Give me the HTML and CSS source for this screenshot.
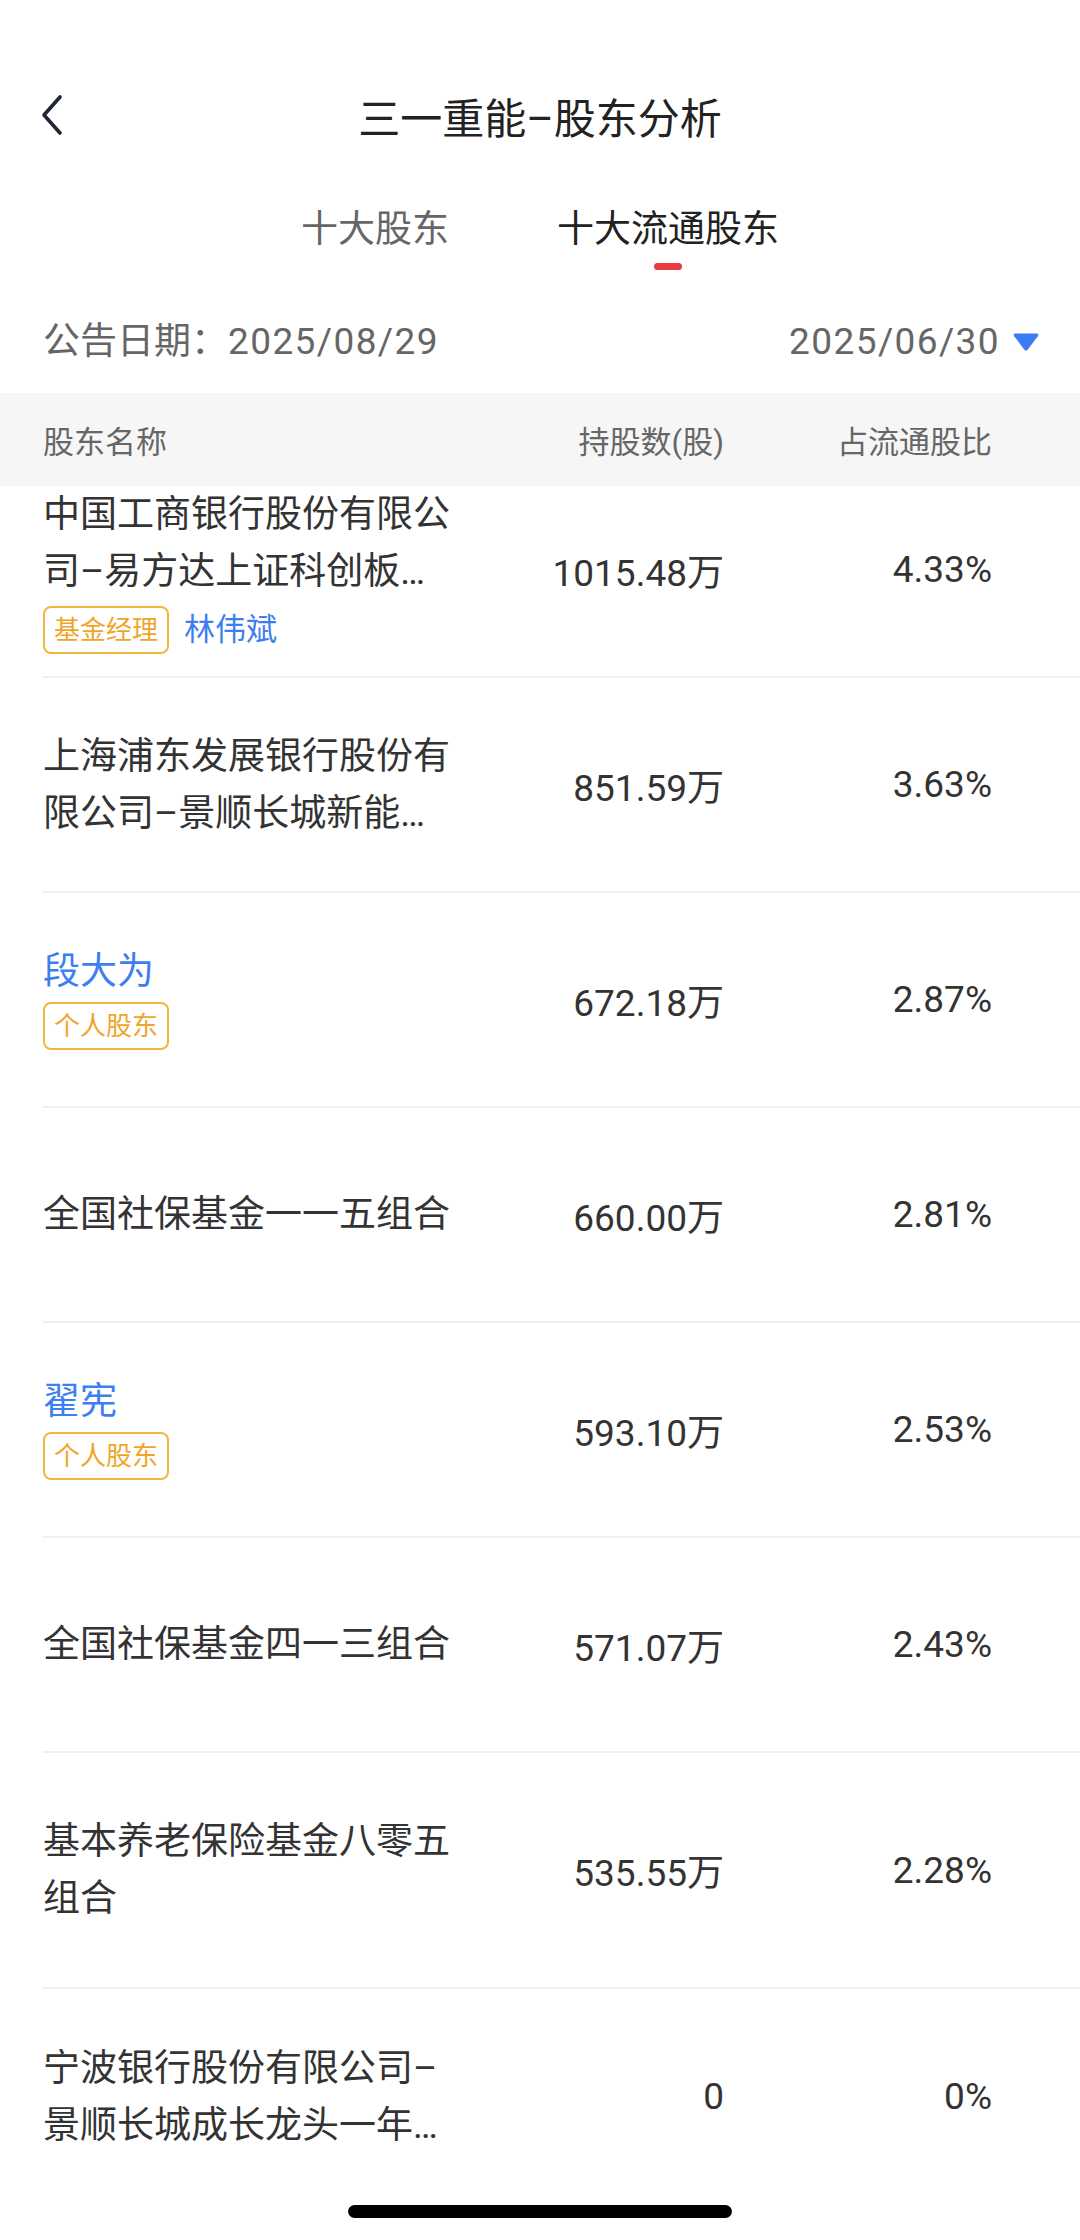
FILE: index.html
```html
<!DOCTYPE html>
<html lang="zh-CN">
<head>
  <meta charset="UTF-8">
  <meta name="viewport" content="width=device-width, initial-scale=1.0">
  <title>三一重能-股东分析</title>
  <link rel="stylesheet" href="styles.css">
</head>
<body>
  <div class="status-bar"></div>

  <header class="nav">
    <a class="back" href="#">
      <svg width="24" height="42" viewBox="0 0 24 42">
        <path d="M20 3 L4 21 L20 39" fill="none" stroke="#1e2733" stroke-width="3.6" stroke-linecap="round" stroke-linejoin="round"/>
      </svg>
    </a>
    <h1 class="title">三一重能–股东分析</h1>
    <span></span>
  </header>

  <nav class="tabs">
    <div class="tab">十大股东</div>
    <div class="tab active">十大流通股东</div>
  </nav>

  <div class="date-row">
    <span>公告日期：<span class="date">2025/08/29</span></span>
    <span class="period"><span class="date">2025/06/30</span>
      <svg width="28" height="20" viewBox="0 0 28 20">
        <path d="M3.5 1.5 H24.5 Q27.5 1.5 25.8 4.2 L15.8 17.6 Q14 19.8 12.2 17.6 L2.2 4.2 Q0.5 1.5 3.5 1.5 Z" fill="#3b7cf6"/>
      </svg>
    </span>
  </div>

  <div class="table-head">
    <span>股东名称</span>
    <span class="num">持股数(股)</span>
    <span class="pct">占流通股比</span>
  </div>

  <div class="list">
    <div class="row">
      <div class="name">
        中国工商银行股份有限公<br>司–易方达上证科创板…
        <div class="tags">
          <span class="tag">基金经理</span>
          <span class="manager">林伟斌</span>
        </div>
      </div>
      <div class="num">1015.48万</div>
      <div class="pct">4.33%</div>
    </div>

    <div class="row">
      <div class="name">上海浦东发展银行股份有<br>限公司–景顺长城新能…</div>
      <div class="num">851.59万</div>
      <div class="pct">3.63%</div>
    </div>

    <div class="row">
      <div class="name">
        <span class="person">段大为</span>
        <div class="tags tight"><span class="tag">个人股东</span></div>
      </div>
      <div class="num">672.18万</div>
      <div class="pct">2.87%</div>
    </div>

    <div class="row">
      <div class="name">全国社保基金一一五组合</div>
      <div class="num">660.00万</div>
      <div class="pct">2.81%</div>
    </div>

    <div class="row">
      <div class="name">
        <span class="person">翟宪</span>
        <div class="tags tight"><span class="tag">个人股东</span></div>
      </div>
      <div class="num">593.10万</div>
      <div class="pct">2.53%</div>
    </div>

    <div class="row">
      <div class="name">全国社保基金四一三组合</div>
      <div class="num">571.07万</div>
      <div class="pct">2.43%</div>
    </div>

    <div class="row tall">
      <div class="name">基本养老保险基金八零五<br>组合</div>
      <div class="num">535.55万</div>
      <div class="pct">2.28%</div>
    </div>

    <div class="row">
      <div class="name">宁波银行股份有限公司–<br>景顺长城成长龙头一年…</div>
      <div class="num">0</div>
      <div class="pct">0%</div>
    </div>
  </div>

  <div class="home-bar"></div>
</body>
</html>
```

FILE: styles.css
```css
* {
  box-sizing: border-box;
}
body {
  margin: 0;
  width: 1080px;
  height: 2240px;
  overflow: hidden;
  background: #fff;
  font-family: Roboto, "Noto Sans CJK SC", sans-serif;
  color: #333;
}

.status-bar {
  height: 72px;
}

/* top bar */
.nav {
  display: grid;
  grid-template-columns: 1fr auto 1fr;
  align-items: center;
  height: 86px;
}
.back {
  display: flex;
  padding-left: 40px;
}
.title {
  margin: 0;
  font-size: 42px;
  font-weight: 400;
  color: #222;
}

/* tabs */
.tabs {
  display: flex;
  justify-content: center;
  align-items: flex-start;
  gap: 108px;
  margin-top: 46px;
}
.tab {
  display: flex;
  flex-direction: column;
  align-items: center;
  font-size: 37px;
  line-height: 52px;
  color: #666;
}
.tab.active {
  color: #222;
}
.tab.active::after {
  content: "";
  width: 28px;
  height: 7px;
  margin-top: 7px;
  border-radius: 4px;
  background: #ec3a3f;
}

/* date */
.date-row {
  display: flex;
  justify-content: space-between;
  align-items: center;
  margin-top: 47px;
  padding: 0 40px 0 43px;
  font-size: 37px;
  line-height: 50px;
  color: #666;
}
.date {
  letter-spacing: 1.4px;
}
.period {
  display: flex;
  align-items: center;
  gap: 12px;
}

/* table */
.table-head {
  display: grid;
  grid-template-columns: 419px 262px 268px;
  align-items: center;
  height: 93px;
  margin-top: 26px;
  padding-left: 43px;
  background: #f6f6f6;
  font-size: 31px;
  color: #666;
}
.num,
.pct {
  text-align: right;
}

.list {
  height: 1754px;
  overflow: hidden;
}
.row {
  display: grid;
  grid-template-columns: 419px 262px 268px;
  align-items: center;
  min-height: 215px;
  margin-left: 43px;
  border-bottom: 2px solid #efefef;
  font-size: 37px;
}
.row:first-child {
  margin-top: -23px;
}
.row:last-child {
  border-bottom: none;
}
.row.tall {
  min-height: 236px;
}
.name {
  line-height: 57px;
  color: #333;
}
.row .num,
.row .pct {
  font-size: 37px;
  color: #333;
}
.person {
  color: #3d7ef0;
}
.tags {
  display: flex;
  align-items: center;
  margin-top: 6px;
}
.tags.tight {
  margin-top: 2px;
  margin-bottom: 6px;
}
.tag {
  height: 48px;
  padding: 0 9px;
  border: 2px solid #f4b53f;
  border-radius: 8px;
  font-size: 26px;
  line-height: 44px;
  color: #f0a52a;
}
.manager {
  margin-left: 15px;
  font-size: 31px;
  line-height: 44px;
  color: #3d7ef0;
}

.home-bar {
  position: fixed;
  left: 348px;
  bottom: 22px;
  width: 384px;
  height: 13px;
  border-radius: 7px;
  background: #000;
}
```
